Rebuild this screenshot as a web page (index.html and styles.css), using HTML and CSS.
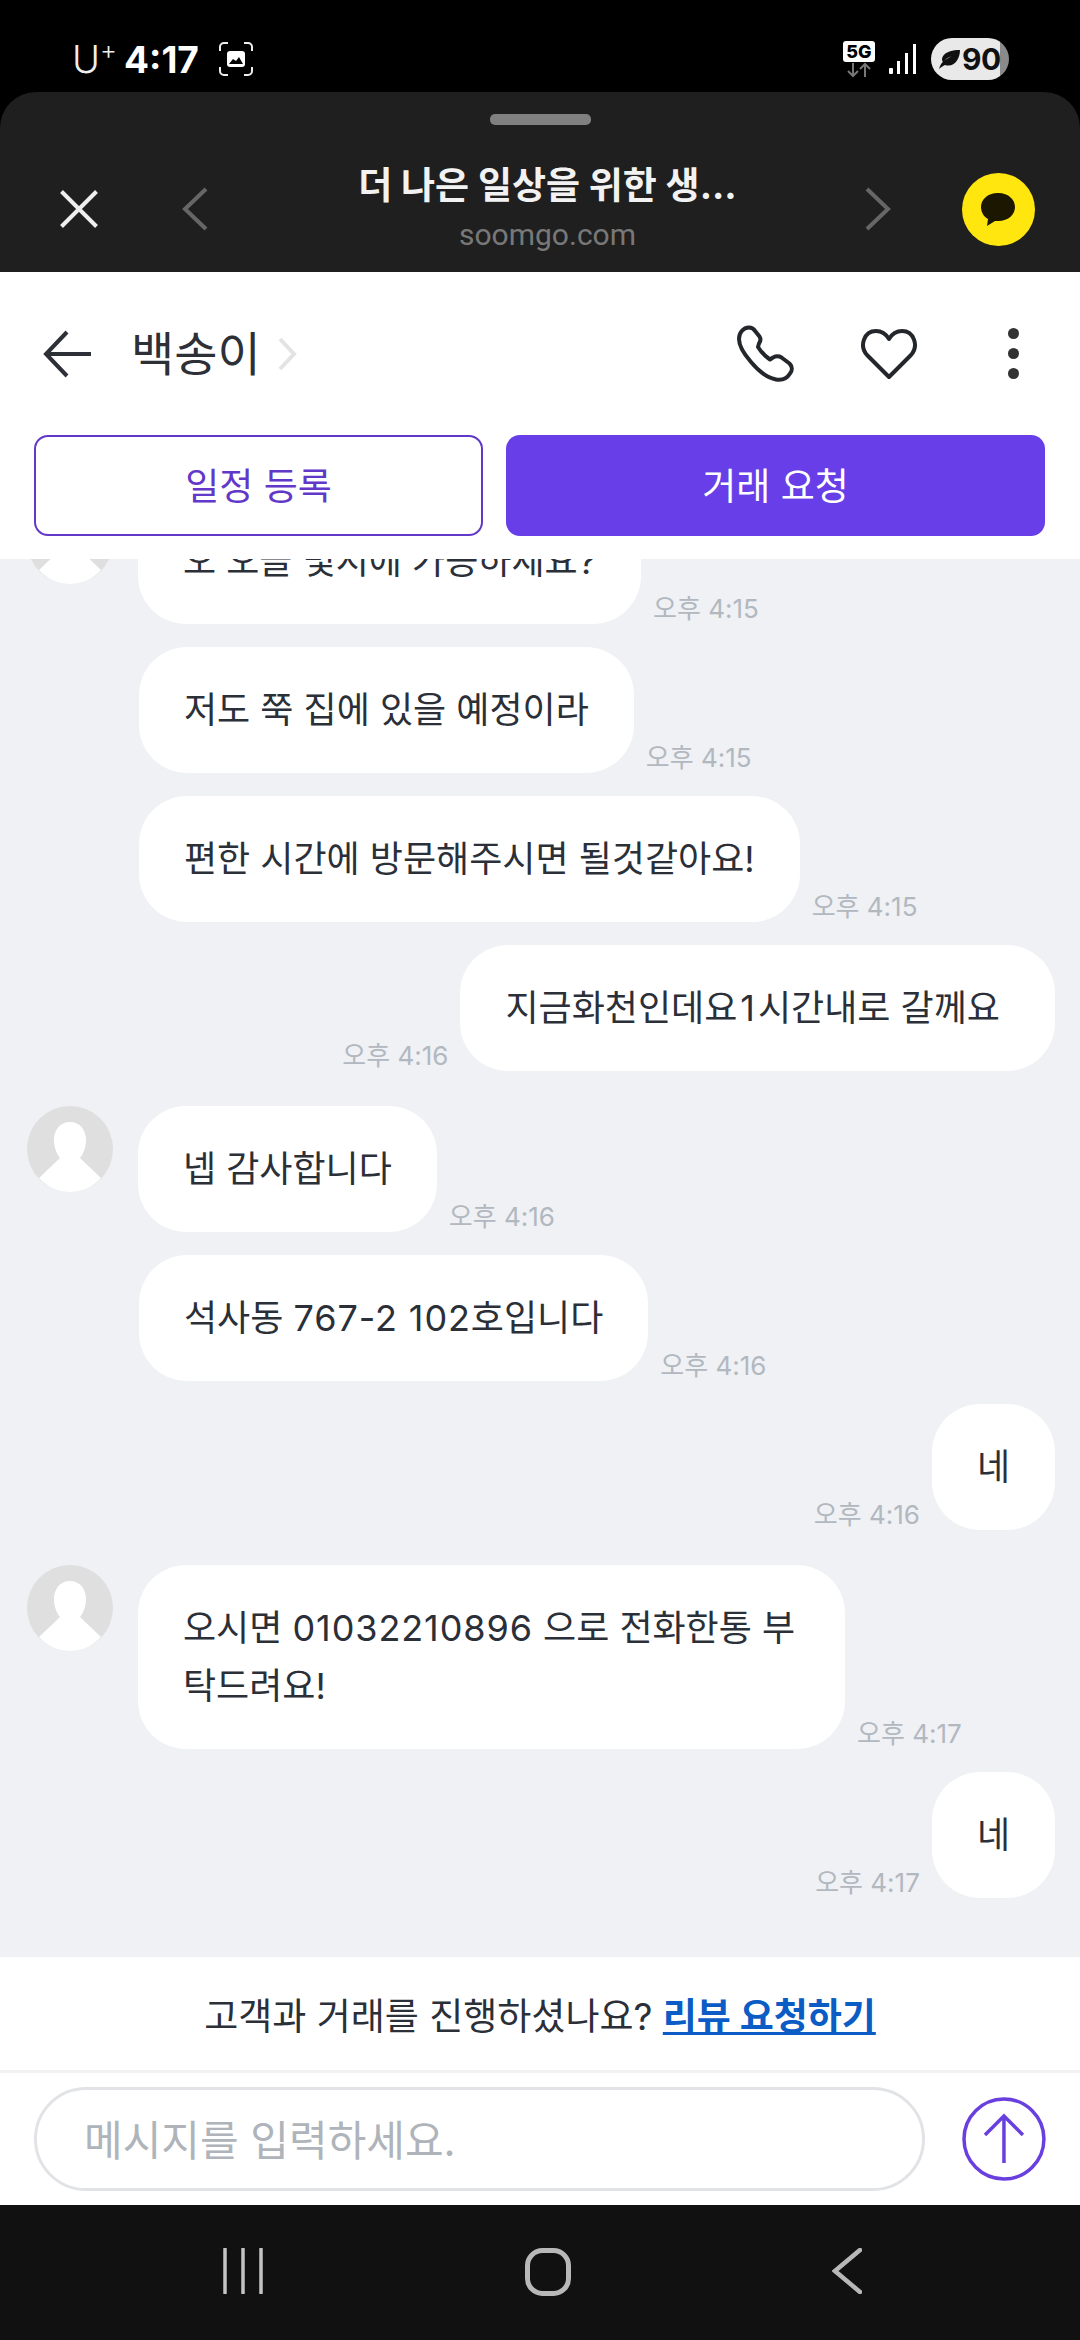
FILE: index.html
```html
<!DOCTYPE html>
<html lang="ko">
<head>
<meta charset="utf-8">
<title>백송이</title>
<link rel="stylesheet" href="styles.css">
</head>
<body>
<div class="screen">
  <div class="status">
    <div class="status-left">
      <span class="carrier">U<sup>+</sup></span>
      <span class="clock">4:17</span>
      <svg class="shot" viewBox="0 0 34 34" width="34" height="34"><path d="M1 9V5a4 4 0 0 1 4-4h4M25 1h4a4 4 0 0 1 4 4v4M33 25v4a4 4 0 0 1-4 4h-4M9 33H5a4 4 0 0 1-4-4v-4" fill="none" stroke="#eee" stroke-width="2"/><rect x="8" y="9" width="18" height="16" rx="3" fill="#fff"/><path d="M10 22l4-5 3 2 3-4 4 7z" fill="#000"/></svg>
    </div>
    <div class="status-right">
      <div class="net">
        <span class="five-g">5G</span>
        <svg viewBox="0 0 28 16" width="28" height="16"><path d="M8 1v13M3 9l5 5 5-5M20 15V2M15 7l5-5 5 5" fill="none" stroke="#777" stroke-width="2"/></svg>
      </div>
      <svg class="signal" viewBox="0 0 28 30" width="28" height="30"><g fill="#fff"><rect x="0" y="24" width="4" height="6" rx="1"/><rect x="8" y="17" width="3" height="13"/><rect x="16" y="9" width="3" height="21"/><rect x="24" y="0" width="3" height="30"/></g></svg>
      <div class="battery">
        <svg viewBox="0 0 24 24" width="24" height="24"><path d="M2 22C3 18 5 15 8 13 11 11 13 10 15 9 12 10 8 12 6 15 3 11 7 3 23 3 23 12 17 21 8 18 6 19 4 20 2 22z" fill="#111"/></svg>
        <span>90</span>
      </div>
    </div>
  </div>

  <div class="sheet">
    <div class="handle"></div>
    <div class="toolbar">
      <svg class="tb-close" viewBox="0 0 38 38" width="38" height="38"><path d="M1.500 1.500l35 35M36.500 1.500l-35 35" stroke="#eee" stroke-width="4" fill="none"/></svg>
      <svg class="tb-prev" viewBox="0 0 26 44" width="26" height="44"><path d="M24 2L3 22l21 20" stroke="#666" stroke-width="4" fill="none"/></svg>
      <div class="tb-title">
        <div class="page-title">더 나은 일상을 위한 생...</div>
        <div class="page-url">soomgo.com</div>
      </div>
      <svg class="tb-next" viewBox="0 0 26 44" width="26" height="44"><path d="M2 2l21 20L2 42" stroke="#666" stroke-width="4" fill="none"/></svg>
      <svg class="tb-kakao" viewBox="0 0 73 73" width="73" height="73"><circle cx="36.500" cy="36.500" r="36.500" fill="#ffe60f"/><path d="M36 20c-11 0-17 7-17 14 0 5 3 10 7 12l-1 7 8-5c1 0 2 0 3 0 11 0 17-7 17-14s-6-14-17-14z" fill="#1c1700"/></svg>
    </div>
  </div>

  <div class="head">
    <div class="nav-row">
      <svg class="back" viewBox="0 0 50 48" width="50" height="48"><path d="M48 24H3M24 2L3 24l21 22" fill="none" stroke="#2d3036" stroke-width="4"/></svg>
      <span class="name">백송이</span>
      <svg class="name-chevron" viewBox="0 0 20 34" width="20" height="34"><path d="M3 2l14 15L3 32" fill="none" stroke="#e3e3e3" stroke-width="4"/></svg>
      <svg class="act phone" viewBox="0 0 58 58" width="58" height="58"><path d="M12 2.500c3 0 5 1.500 6.500 4l4 5c1.500 2.500 1 5-.5 7l-1 3.500c3 5 7 9 12 12.500l3-2c3-1.500 6-1.500 8.500 0l8 6c3 3 3 7 .5 10-3 5-8 7-14 6C30 53 22 46.500 14 37 7 29 2 21 2 14 2 8 6 2.500 12 2.500z" fill="none" stroke="#23262b" stroke-width="4" stroke-linejoin="round"/></svg>
      <svg class="act heart" viewBox="0 0 58 52" width="58" height="52"><path d="M29 49L7 27C-1 18 4 3 16 3c6 0 10 3 13 8 3-5 7-8 13-8 12 0 17 15 9 24z" fill="none" stroke="#23262b" stroke-width="4" stroke-linejoin="round"/></svg>
      <div class="dots"><i></i><i></i><i></i></div>
    </div>
    <div class="btn-row">
      <div class="btn outline">일정 등록</div>
      <div class="btn solid">거래 요청</div>
    </div>
  </div>

  <div class="chat">
    <div class="msg them first">
      <div class="avatar"><svg viewBox="0 0 86 86" width="86" height="86"><circle cx="43" cy="43" r="43" fill="#dfdfdf"/><path d="M43 16c-10 0-16 8-16 18 0 8 3 14 6 18l-21 20c8 9 19 14 31 14s23-5 31-14L53 52c3-4 6-10 6-18 0-10-6-18-16-18z" fill="#fff"/></svg></div>
      <div class="bubble">오 오늘 몇시에 가능하세요?</div>
      <span class="time">오후 4:15</span>
    </div>
    <div class="msg them cont">
      <div class="bubble">저도 쭉 집에 있을 예정이라</div>
      <span class="time">오후 4:15</span>
    </div>
    <div class="msg them cont">
      <div class="bubble">편한 시간에 방문해주시면 될것같아요!</div>
      <span class="time">오후 4:15</span>
    </div>
    <div class="msg me cont">
      <span class="time">오후 4:16</span>
      <div class="bubble">지금화천인데요<span class="one">1</span>시간내로 갈께요&nbsp;</div>
    </div>
    <div class="msg them first">
      <div class="avatar"><svg viewBox="0 0 86 86" width="86" height="86"><circle cx="43" cy="43" r="43" fill="#dfdfdf"/><path d="M43 16c-10 0-16 8-16 18 0 8 3 14 6 18l-21 20c8 9 19 14 31 14s23-5 31-14L53 52c3-4 6-10 6-18 0-10-6-18-16-18z" fill="#fff"/></svg></div>
      <div class="bubble">넵 감사합니다</div>
      <span class="time">오후 4:16</span>
    </div>
    <div class="msg them cont">
      <div class="bubble">석사동 <span class="num">767-2 102</span>호입니다</div>
      <span class="time">오후 4:16</span>
    </div>
    <div class="msg me cont">
      <span class="time">오후 4:16</span>
      <div class="bubble">네</div>
    </div>
    <div class="msg them first">
      <div class="avatar"><svg viewBox="0 0 86 86" width="86" height="86"><circle cx="43" cy="43" r="43" fill="#dfdfdf"/><path d="M43 16c-10 0-16 8-16 18 0 8 3 14 6 18l-21 20c8 9 19 14 31 14s23-5 31-14L53 52c3-4 6-10 6-18 0-10-6-18-16-18z" fill="#fff"/></svg></div>
      <div class="bubble wide">오시면 <span class="num">01032210896</span> 으로 전화한통 부탁드려요!</div>
      <span class="time">오후 4:17</span>
    </div>
    <div class="msg me cont">
      <span class="time">오후 4:17</span>
      <div class="bubble">네</div>
    </div>
  </div>

  <div class="review">고객과 거래를 진행하셨나요? <a class="review-link">리뷰 요청하기</a></div>

  <div class="composer">
    <div class="input">메시지를 입력하세요.</div>
    <svg class="send" viewBox="0 0 84 84" width="84" height="84"><circle cx="42" cy="42" r="40" fill="none" stroke="#6a3fe0" stroke-width="3.500"/><path d="M42 66V20M23 38l19-19 19 19" fill="none" stroke="#6a3fe0" stroke-width="3.500"/></svg>
  </div>

  <div class="navbar">
    <svg viewBox="0 0 42 46" width="42" height="46"><path d="M3 1v44M21 1v44M39 1v44" stroke="#c4c4c4" stroke-width="3.500" stroke-linecap="round"/></svg>
    <svg viewBox="0 0 46 48" width="46" height="48"><rect x="2.500" y="2.500" width="41" height="43" rx="15" fill="none" stroke="#b8b8b8" stroke-width="5"/></svg>
    <svg viewBox="0 0 30 46" width="30" height="46"><path d="M28 2L3 23l25 21" fill="none" stroke="#b8b8b8" stroke-width="4.500" stroke-linecap="round"/></svg>
  </div>
</div>
</body>
</html>
```
FILE: styles.css
```css
* { box-sizing: border-box; }
html, body { margin: 0; padding: 0; }
body { background: #000; font-family: "Inter", "Noto Sans CJK KR", sans-serif; }
.screen { width: 1080px; height: 2340px; display: flex; flex-direction: column; overflow: hidden; background: #000; }

.status { height: 92px; flex: none; display: flex; justify-content: space-between; align-items: center; padding: 26px 71px 0 72px; color: #fff; }
.status-left { display: flex; align-items: center; }
.carrier { font-family: "Inter", sans-serif; font-weight: 300; font-size: 38px; width: 52px; color: #eee; line-height: 1; }
.carrier sup { font-size: 26px; line-height: 0; vertical-align: 14px; }
.clock { font-family: "Inter", sans-serif; font-weight: 700; font-size: 37px; width: 95px; line-height: 1; }
.status-right { display: flex; align-items: center; }
.net { display: flex; flex-direction: column; align-items: center; width: 32px; margin-right: 14px; }
.five-g { background: #fff; color: #000; font-family: "Inter", sans-serif; font-weight: 800; font-size: 18px; line-height: 21px; height: 21px; width: 32px; text-align: center; border-radius: 3px; }
.signal { margin-right: 14px; }
.battery { width: 78px; height: 42px; border-radius: 21px; background: linear-gradient(to right, #e9e9e9 88%, #8a8a8a 88%); display: flex; align-items: center; padding-left: 6px; gap: 1px; color: #111; font-family: "Inter", sans-serif; font-weight: 700; font-size: 30px; letter-spacing: -.5px; }

.sheet { height: 180px; flex: none; background: #1f1f1f; border-radius: 36px 36px 0 0; padding-top: 22px; }
.handle { width: 101px; height: 11px; border-radius: 5px; background: #808080; margin: 0 auto; }
.toolbar { display: flex; align-items: center; height: 112px; margin-top: 28px; padding: 0 45px 0 60px; }
.tb-close { margin-right: 84px; }
.tb-title { flex: 1; text-align: center; padding-left: 22px; }
.page-title { font-weight: 700; font-size: 37px; line-height: 46px; color: #f2f2f2; }
.page-url { font-family: "Roboto", sans-serif; font-size: 30px; line-height: 40px; margin-top: 6px; color: #787878; }
.tb-next { margin-right: 71px; }

.head { height: 287px; flex: none; background: #fff; padding: 0 34px 0 34px; }
.nav-row { height: 163px; display: flex; align-items: center; }
.back { margin-left: 9px; margin-right: 38px; }
.name { font-size: 47px; color: #2d3036; line-height: 1; }
.name-chevron { margin-left: 16px; }
.act { flex: none; }
.phone { margin-left: auto; margin-right: 65px; }
.heart { margin-right: 90px; }
.dots { display: flex; flex-direction: column; gap: 9px; margin-right: 27px; }
.dots i { display: block; width: 11px; height: 11px; border-radius: 50%; background: #323232; }
.btn-row { display: flex; gap: 23px; }
.btn { height: 101px; border-radius: 14px; display: flex; align-items: center; justify-content: center; padding-bottom: 4px; font-size: 37px; font-weight: 400; }
.outline { width: 449px; border: 2px solid #6238c9; color: #6238c9; background: #fff; }
.solid { width: 539px; background: #673ee8; color: #fff; }

.chat { flex: 1; min-height: 0; background: #eff1f4; overflow: hidden; display: flex; flex-direction: column; justify-content: flex-end; padding: 0 25px 59px 27px; }
.msg { display: flex; align-items: flex-end; gap: 12px; flex: none; }
.msg.first { margin-top: 35px; }
.msg.cont { margin-top: 23px; }
.msg.them.cont { padding-left: 112px; }
.msg.me { justify-content: flex-end; }
.avatar { width: 86px; height: 86px; margin-right: 13px; align-self: flex-start; flex: none; }
.avatar svg { display: block; }
.bubble { background: #fff; border-radius: 48px; padding: 34px 45px; font-size: 36px; line-height: 58px; color: #2b2f38; }
.bubble.wide { width: 707px; }
.num { letter-spacing: .9px; }
.one { margin: 0 3px; }
.time { font-size: 26px; line-height: 36px; margin-bottom: -3px; color: #b2b8c0; flex: none; }

.review { height: 113px; flex: none; background: #fff; display: flex; align-items: center; justify-content: center; font-size: 37px; color: #2b2f38; white-space: pre; }
.review-link { color: #0b5cc4; font-weight: 700; text-decoration: underline; }

.composer { height: 135px; flex: none; background: #fff; border-top: 3px solid #f2f2f3; display: flex; align-items: center; padding: 0 34px; }
.input { width: 892px; height: 104px; border: 3px solid #e1e3e6; border-radius: 52px; display: flex; align-items: center; padding: 0 0 4px 47px; font-size: 42px; color: #aeb4ba; }
.send { margin-left: 37px; }

.navbar { height: 135px; flex: none; background: #111; display: flex; justify-content: space-between; align-items: flex-start; padding: 43px 218px 0 222px; }
```
